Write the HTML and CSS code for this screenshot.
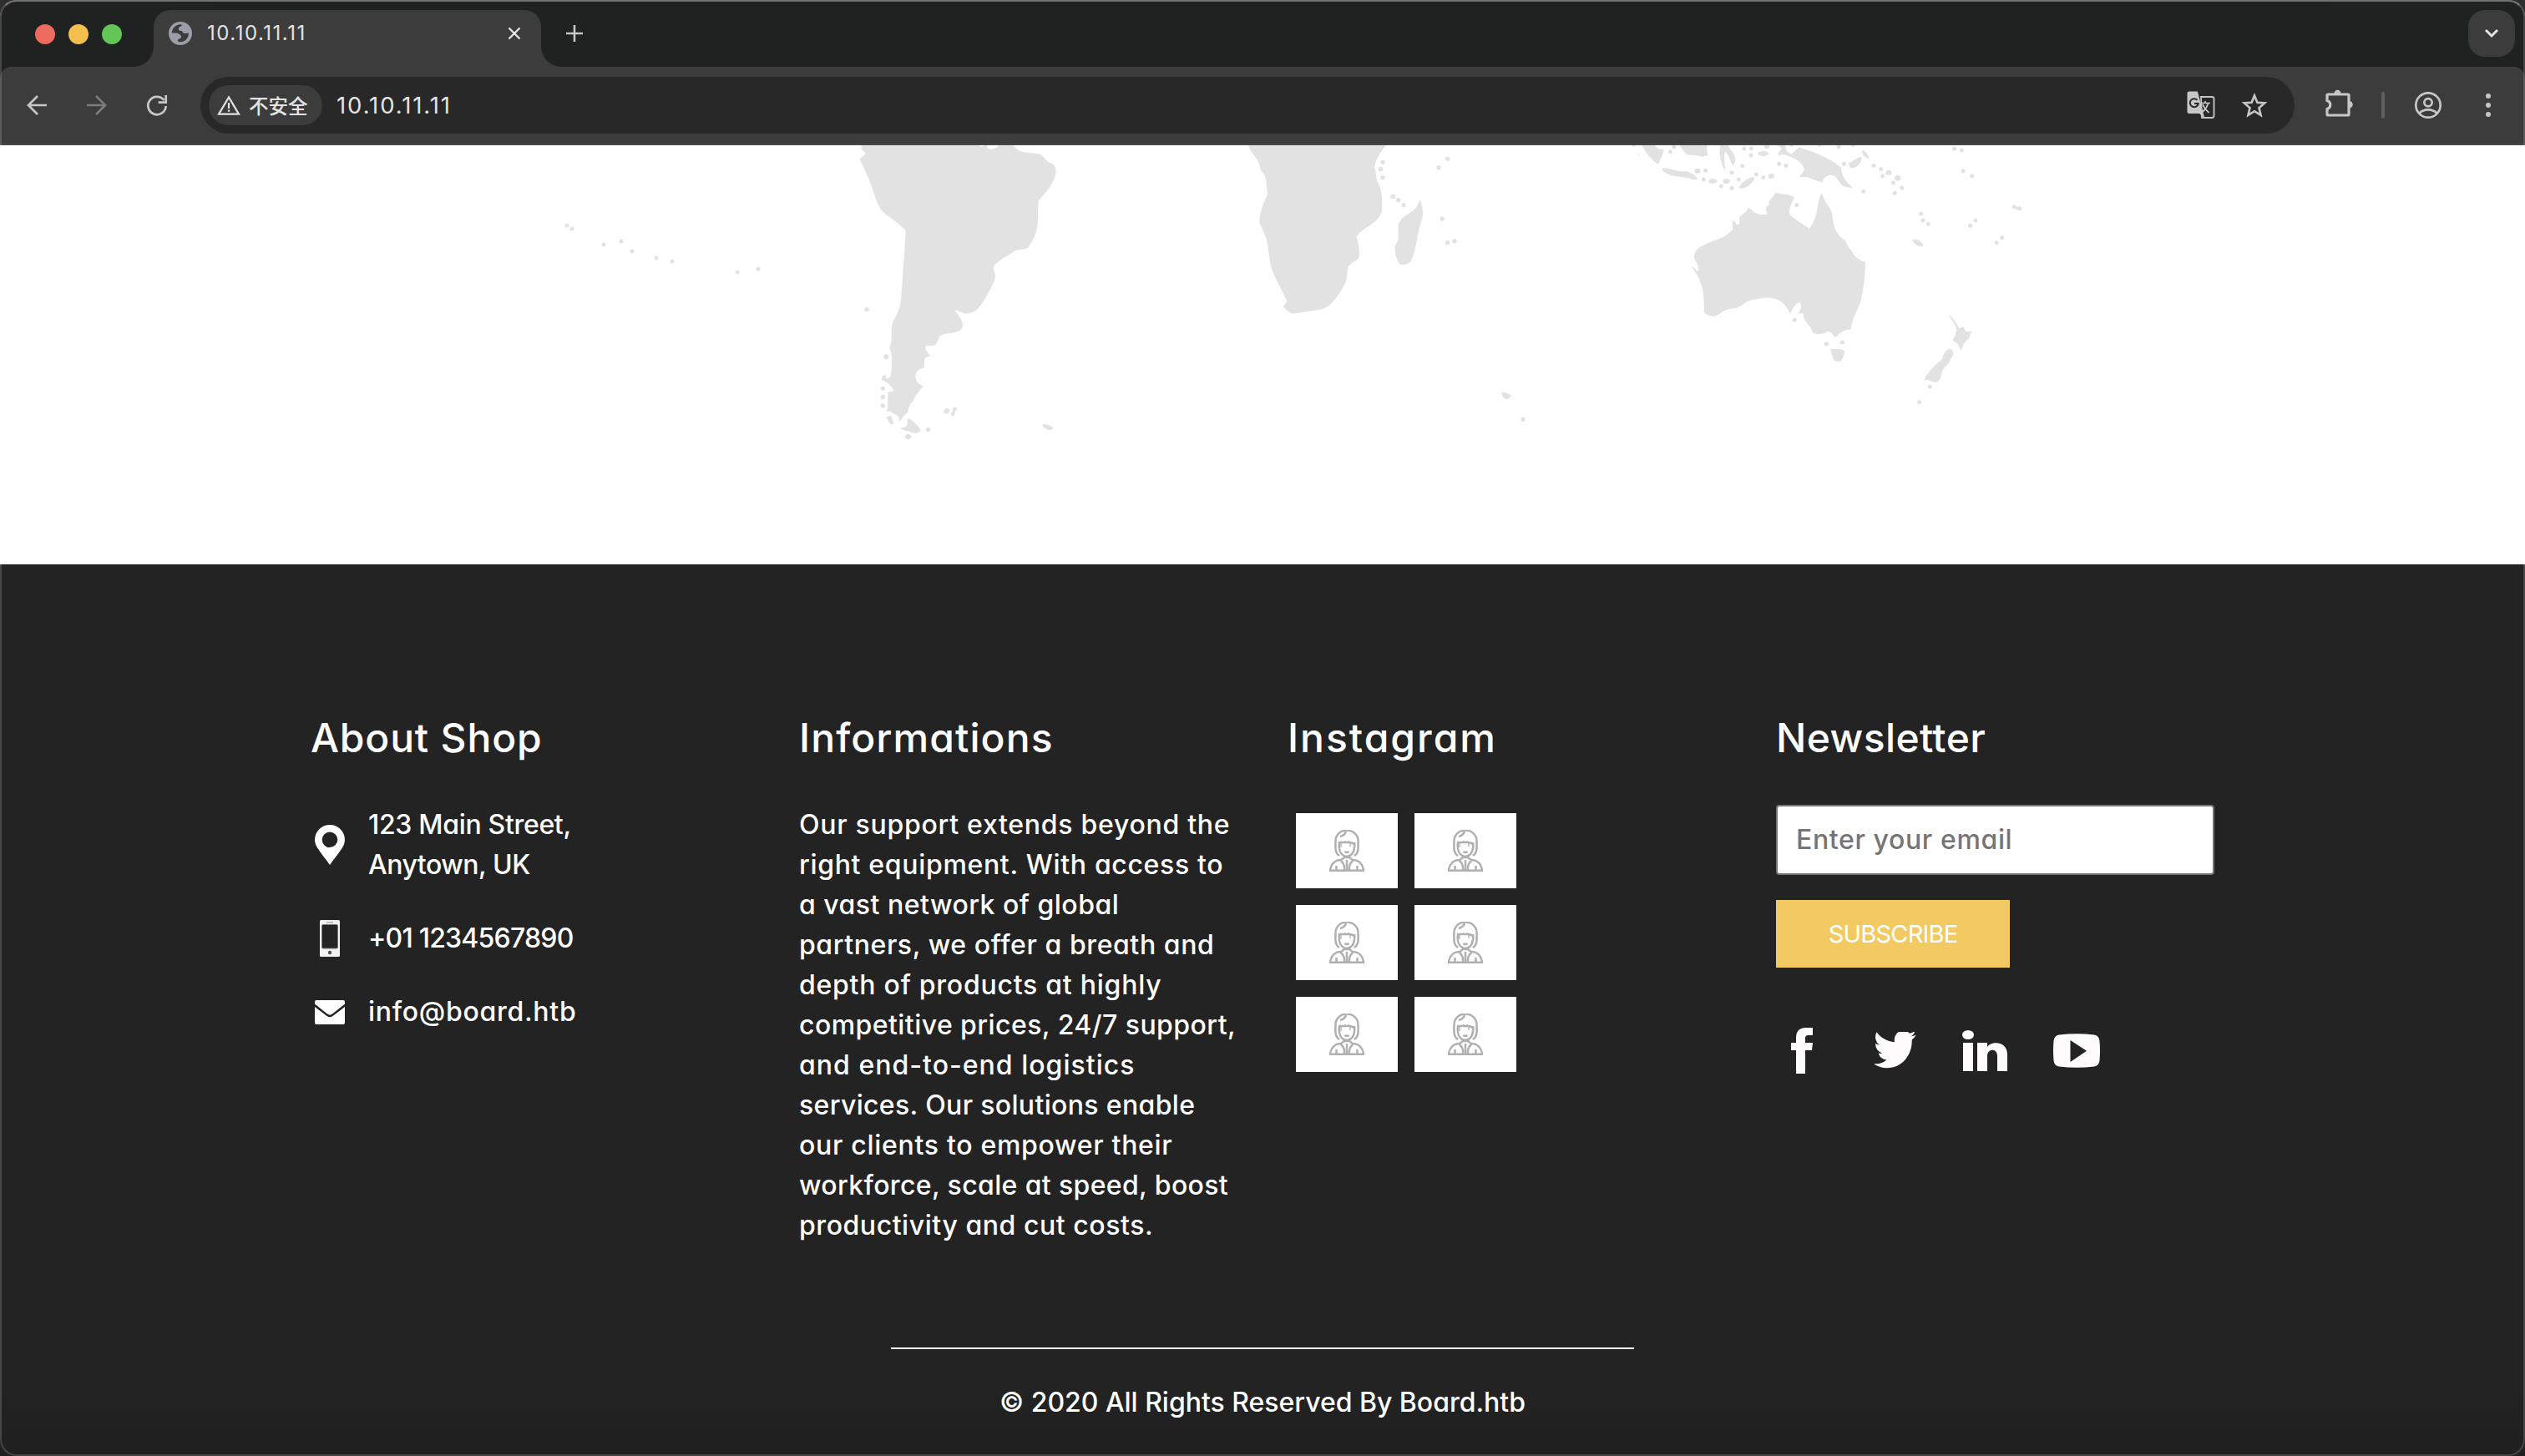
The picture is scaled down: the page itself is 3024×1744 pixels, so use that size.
FILE: index.html
```html
<!DOCTYPE html>
<html lang="en">
<head>
<meta charset="utf-8">
<title>10.10.11.11</title>
<link rel="stylesheet" href="styles.css">
</head>
<body>
<div class="window">
  <header class="chrome">
    <div class="tabstrip">
      <div class="lights"><i class="light red"></i><i class="light amber"></i><i class="light green"></i></div>
      <div class="tab">
        <svg class="favicon" viewBox="0 0 28 28"><circle cx="14" cy="14" r="14" fill="#9a9ea8"/><path d="M10.3 3.9c2.4-.9 5-.7 6-.1-.3 1.9-4 1.800-4.400 4.600-.3 2 1.500 2.600 4 2.600.3 1.600 1.300 2.700 3.400 2.900 1.800.2 3.300-.2 4.500-.5.5 3.500-2 10.700-9.800 10.900-2 0-3.200-.5-3.200-1.800 0-2.500 3.600-1.600 4.200-4 .5-2-1.200-2.600-2.600-3.700-1.700-1.500-6-1.200-8.600-1.300 0-4.300 2.900-8.200 6.500-9.600Z" fill="#3c3c3c"/></svg>
        <span class="tab-title">10.10.11.11</span>
        <svg class="tab-close" viewBox="0 0 16 16"><path d="M1.500 1.500l13 13M14.500 1.500l-13 13"/></svg>
      </div>
      <svg class="new-tab" viewBox="0 0 20 20"><path d="M10 0v20M0 10h20"/></svg>
      <div class="tab-search"><svg viewBox="0 0 18 12"><path d="M2 2l7 7 7-7"/></svg></div>
    </div>
    <div class="toolbar">
      <svg class="nav back" viewBox="0 0 24 24"><path d="M24 12H2M13 1L2 12l11 11"/></svg>
      <svg class="nav forward" viewBox="0 0 24 24"><path d="M0 12h22M11 1l11 11-11 11"/></svg>
      <svg class="nav reload" viewBox="0 0 24 24"><path d="M20.500 6A10.700 10.700 0 1 0 22.700 13M22.700 0v8.700h-9"/></svg>
      <div class="omnibox">
        <div class="chip">
          <svg viewBox="0 0 28 24"><path d="M14 2.500L2 22.700h24z" fill="none" stroke="#e3e3e3" stroke-width="2.200"/><path d="M14 9v7M14 17.500v2.300" stroke="#e3e3e3" stroke-width="2.200"/></svg>
          <span>不安全</span>
        </div>
        <span class="url">10.10.11.11</span>
        <svg class="translate" viewBox="0 0 34 34"><path d="M17 7h13a2.500 2.500 0 0 1 2.500 2.500v20a2.500 2.500 0 0 1-2.500 2.500H18z" fill="none" stroke="#c7c7c7" stroke-width="1.800"/><path d="M3 .5h9.800L21.500 33 15 27H3A2.500 2.500 0 0 1 .5 24.500V3A2.500 2.500 0 0 1 3 .5Z" fill="#c7c7c7"/><path d="M12.500 10.800a5 5 0 1 0 1.200 4.200H9" fill="none" stroke="#282828" stroke-width="2"/><path d="M16 14.500h12M22 12v2.500M25.500 14.500c-1 4-3.500 8-7 10.500M19 16c1.500 4 4 7 7.500 10" fill="none" stroke="#c7c7c7" stroke-width="1.700"/></svg>
        <svg class="star" viewBox="0 0 32 31"><path d="M16 3.500l3.400 8.200 8.800.7-6.700 5.800 2.100 8.700-7.600-4.700-7.600 4.700 2.100-8.700-6.700-5.800 8.800-.7z"/></svg>
      </div>
      <svg class="ext" viewBox="0 0 34 34"><path d="M3 6h24a1 1 0 0 1 1 1v23a1 1 0 0 1-1 1H3a1 1 0 0 1-1-1v-6.500a5.200 5.200 0 0 0 0-10V7a1 1 0 0 1 1-1Z" fill="none" stroke="#c7c7c7" stroke-width="3.200"/><path d="M10.500 5a4 4.300 0 0 1 8 0zM28.500 14a4.200 4.200 0 0 1 0 8.400z" fill="#c7c7c7"/></svg>
      <i class="divider"></i>
      <svg class="avatar" viewBox="0 0 32 32"><circle cx="16" cy="16" r="14.700"/><circle cx="16" cy="12.800" r="4.600"/><path d="M5.500 25.500c5.500-5.500 15.500-5.500 21 0"/></svg>
      <svg class="menu" viewBox="0 0 6 28"><circle cx="3" cy="3" r="3"/><circle cx="3" cy="14" r="3"/><circle cx="3" cy="25" r="3"/></svg>
    </div>
  </header>

  <main class="map">
    <svg viewBox="0 174 3024 502" fill="#e2e2e2" stroke-linecap="round">
      <g transform="translate(980 160) scale(.33333)">
        <path d="M155 38V55L171 71 149 92C165 125 180 155 190 187C203 220 210 252 227 276C250 300 290 320 314 348C310 430 303 520 297 600C293 640 270 665 264 692C260 715 268 740 256 772C268 795 264 830 262 862C258 880 252 885 240 877L228 886C248 892 262 905 271 924L250 930V988L244 996C265 998 280 1010 292 1022L288 1036C300 1028 308 1010 321 1002C325 985 328 972 340 962C350 938 362 925 378 908C355 900 349 885 349 870C350 855 360 846 378 842C384 830 378 818 384 806L403 798C390 785 383 775 385 764C400 760 414 764 422 758C432 745 430 732 442 724C470 714 520 722 519 684C514 662 500 652 490 633C510 636 520 652 545 645C575 640 592 605 607 580C620 555 634 530 637 512C635 498 625 484 633 472C655 452 675 442 695 430C715 408 738 424 755 408C770 390 780 365 786 340C792 305 786 265 792 240C820 208 852 175 854 135C854 120 845 108 830 104C815 94 812 84 798 74C775 68 755 70 730 65C712 58 706 48 694 38H652C640 60 614 60 606 50L604 40 583 48 575 38Z"/>
        <path d="M323 1023C345 1036 360 1050 368 1068C355 1080 340 1077 330 1072C315 1068 305 1066 294 1057C320 1056 321 1050 320 1030ZM244 1018L262 1014 271 1042 260 1046ZM231 870L242 868 244 884 228 886ZM450 995C460 980 478 988 470 1000C464 1010 450 1008 450 995ZM484 984H498L488 1010 480 1012ZM804 1047C815 1040 840 1050 845 1060C830 1072 815 1064 804 1047Z"/>
        <ellipse cx="323" cy="1089" rx="11" ry="9"/><circle cx="174" cy="632" r="8"/><circle cx="244" cy="802" r="9"/><circle cx="232" cy="916" r="8"/><circle cx="232" cy="947" r="8"/><circle cx="232" cy="978" r="8"/><circle cx="395" cy="1064" r="8"/><circle cx="491" cy="990" r="7"/><circle cx="483" cy="1008" r="7"/>
      </g>
      <g transform="translate(1480 160) scale(.33333)">
        <path d="M45 38C50 72 85 85 88 128C116 160 107 170 114 212C108 240 85 270 85 320C110 370 113 380 120 440C128 510 160 545 184 604L170 621C182 635 190 642 206 647L300 633C340 625 350 602 375 570C410 520 395 505 404 480C420 455 444 460 444 435C444 405 440 390 433 372C460 330 520 325 526 270C526 230 525 200 510 175C500 150 506 135 497 120C510 75 530 55 542 38Z"/>
        <path d="M661 236C672 260 676 290 668 310C652 360 648 420 630 458C618 470 600 472 591 471C575 450 571 425 572 402C590 380 583 370 584 345C583 300 615 295 638 276C655 262 656 250 661 236ZM955 932C968 922 978 940 990 938C982 962 960 958 955 932Z"/>
        <g><circle cx="528" cy="103" r="8"/><circle cx="521" cy="128" r="8"/><circle cx="528" cy="158" r="8"/><circle cx="565" cy="226" r="8"/><circle cx="584" cy="239" r="8"/><circle cx="603" cy="257" r="8"/><circle cx="761" cy="91" r="8"/><circle cx="729" cy="122" r="8"/><circle cx="742" cy="306" r="8"/><circle cx="761" cy="392" r="8"/><circle cx="786" cy="386" r="8"/><circle cx="1032" cy="1027" r="8"/></g>
      </g>
      <g transform="translate(1940 160) scale(.33333)">
        <path d="M560 212C580 218 600 216 612 222L627 230C618 250 606 265 610 290C630 310 655 322 680 342C720 290 705 240 726 212C738 260 762 262 764 300C768 340 780 365 810 385C820 410 832 418 842 437C855 452 868 455 882 463C882 510 875 560 866 600C850 645 835 665 829 704C805 704 795 712 776 732C764 725 758 710 745 712C730 722 705 725 692 714C688 692 670 685 660 660C662 645 652 640 640 652C646 635 655 625 648 608C632 605 622 630 612 647C600 625 590 605 560 595C530 583 500 595 465 600C445 608 430 628 412 628C375 630 365 645 345 656C330 660 310 652 302 640C304 600 300 560 288 530C282 510 270 500 260 480C270 480 275 498 281 494C290 470 264 460 267 437C272 410 300 402 330 388C365 375 375 375 405 345V310C415 318 418 328 424 328C436 318 426 310 432 298C445 285 455 285 462 267C478 270 475 295 528 290C530 275 515 272 536 255C530 240 550 232 560 212Z"/>
        <path d="M756 773C775 776 800 770 807 782C805 800 800 810 794 817C785 822 772 819 768 812C764 800 760 788 756 773ZM1181 650C1192 655 1208 680 1220 700L1234 694 1243 712 1263 711C1258 725 1256 736 1250 740C1240 745 1235 760 1224 779C1218 765 1220 755 1196 744C1210 715 1210 705 1208 695C1200 678 1188 665 1181 650ZM1190 774C1200 782 1202 798 1190 806C1182 830 1162 840 1157 856C1155 875 1150 890 1135 894C1115 892 1110 880 1092 888C1105 860 1130 830 1157 812C1162 795 1170 772 1190 774ZM1050 384C1065 372 1088 392 1090 402C1075 412 1060 398 1050 384Z"/>
        <path d="M560 38H595C592 55 600 65 615 74L643 50C690 62 750 85 795 122C798 160 812 170 838 196C805 192 798 190 785 168C770 140 735 145 728 174C705 174 680 150 646 156C655 142 664 135 662 126C655 98 620 85 590 75L570 78C566 65 580 60 582 52ZM76 38H122C130 50 142 60 158 56C155 80 145 90 138 110C115 98 90 65 76 38ZM213 38H315C310 55 315 70 315 77L295 83C275 75 250 80 240 74C228 65 220 50 213 38ZM361 38H389C390 55 405 60 412 80C418 100 412 112 405 114C395 95 390 75 378 64C372 85 376 115 380 130C365 120 368 105 362 92C356 75 359 55 361 38ZM152 124C190 125 200 138 235 136C255 138 268 150 280 162C268 172 255 160 235 158C200 154 165 152 152 130ZM428 196C432 175 470 152 484 158C480 180 445 204 428 196ZM822 106C840 100 855 82 868 85C872 110 840 130 826 122ZM869 60C885 62 896 80 894 90C880 86 870 75 869 60ZM62 66L72 80 66 76ZM1410 258L1440 266 1434 276 1412 266Z"/>
        <ellipse cx="279" cy="134" rx="11" ry="9"/><ellipse cx="334" cy="171" rx="15" ry="8"/><ellipse cx="383" cy="171" rx="13" ry="9"/><ellipse cx="515" cy="72" rx="19" ry="9"/><ellipse cx="528" cy="46" rx="9" ry="9"/><ellipse cx="544" cy="153" rx="11" ry="9"/><ellipse cx="966" cy="140" rx="11" ry="9"/><ellipse cx="998" cy="160" rx="11" ry="10"/>
        <path fill="none" stroke="#e2e2e2" stroke-width="15" d="M49 40h0M181 66h0M194 48h0M308 133h0M301 165h0M364 189h0M402 196h0M402 140h0M427 165h0M440 116h0M446 54h0M472 54h0M471 78h0M490 146h0M515 158h0M572 109h0M597 115h0M617 40h0M717 40h0M786 48h0M838 40h0M805 109h0M875 208h0M912 115h0M938 128h0M944 152h0M982 177h0M1013 195h0M988 214h0M635 257h0M1202 54h0M1228 60h0M1234 134h0M1265 152h0M1082 288h0M1089 312h0M1108 325h0M1259 331h0M1278 312h0M1373 374h0M1354 392h0M1417 263h0M1436 269h0M628 670h0M742 756h0M799 750h0M1114 910h0M1076 965h0"/>
      </g>
      <path fill="none" stroke="#e2e2e2" stroke-width="5" d="M679 270h0M685 274h0M723 293h0M744 289h0M757 301h0M786 309h0M805 313h0M883 326h0M908 322h0"/>
    </svg>
  </main>

  <footer class="footer">
    <div class="columns">
      <section>
        <h2 class="t-about">About Shop</h2>
        <ul class="contact">
          <li><svg class="pin" viewBox="0 0 36 48"><path fill-rule="evenodd" d="M18 0a18 18 0 0 1 18 18c0 9-10 18-18 30C10 36 0 27 0 18A18 18 0 0 1 18 0Zm0 8.500a9.300 9.300 0 1 0 0 18.600 9.300 9.300 0 0 0 0-18.600Z"/></svg>
            <p><span class="l-main">123 Main Street,</span><span class="l-any">Anytown, UK</span></p></li>
          <li><svg class="phone" viewBox="0 0 24 44"><rect width="24" height="44" rx="1.500" fill="#f2f0f1"/><rect x="2.500" y="5.500" width="19" height="28.500" rx="1.500" fill="#232323" stroke="#777" stroke-width="1"/><rect x="8" y="2" width="8" height="2" fill="#bbb"/><circle cx="12" cy="39" r="2.200" fill="#555"/></svg>
            <p><span class="l-tel">+01 1234567890</span></p></li>
          <li><svg class="mail" viewBox="0 0 36 29"><path d="M2 0h32a2 2 0 0 1 2 2v2.500L21 16.500q-3 2.300-6 0L0 4.500V2a2 2 0 0 1 2-2ZM0 8l14.500 11q3.500 2.500 7 0L36 8v19a2 2 0 0 1-2 2H2a2 2 0 0 1-2-2Z"/></svg>
            <p><span class="l-mail">info@board.htb</span></p></li>
        </ul>
      </section>
      <section>
        <h2 class="t-info">Informations</h2>
        <p class="info"><span class="i1">Our support extends beyond the</span><span class="i2">right equipment. With access to</span><span class="i3">a vast network of global</span><span class="i4">partners, we offer a breath and</span><span class="i5">depth of products at highly</span><span class="i6">competitive prices, 24/7 support,</span><span class="i7">and end-to-end logistics</span><span class="i8">services. Our solutions enable</span><span class="i9">our clients to empower their</span><span class="i10">workforce, scale at speed, boost</span><span class="i11">productivity and cut costs.</span></p>
      </section>
      <section>
        <h2 class="t-insta">Instagram</h2>
        <svg class="defs" width="0" height="0"><defs><g id="person" fill="none" stroke="#b0b0b0" stroke-width="2.500">
          <path d="M12 31C6 27 7.500 20 7.500 13a13.500 12.500 0 0 1 27 0c0 7 1.500 14-4.500 18"/>
          <path d="M12 15c-1 8 1 16 9 17 8-1 10-9 9-17M11 15h11c4-.5 7 1 9 3M13 8c4-1 6-3 7-6"/>
          <path d="M14 16v5M19 13v3M23 13v3M25 16v4" stroke-width="1.300"/><path d="M18.500 26q2.500 2 5 0"/>
          <path d="M1 50c0-9 6-14 13-14l4-3h6l4 3c7 0 13 5 13 14M14 37c5 5 4 8 4 13M28 37c-5 5-4 8-4 13M21 36v13M8.500 43v6M33.500 43v6"/><path d="M0 49h42" stroke-width="3"/></g></defs></svg>
        <div class="gallery">
          <div class="tile"><svg viewBox="0 0 42 50"><use href="#person"/></svg></div>
          <div class="tile"><svg viewBox="0 0 42 50"><use href="#person"/></svg></div>
          <div class="tile"><svg viewBox="0 0 42 50"><use href="#person"/></svg></div>
          <div class="tile"><svg viewBox="0 0 42 50"><use href="#person"/></svg></div>
          <div class="tile"><svg viewBox="0 0 42 50"><use href="#person"/></svg></div>
          <div class="tile"><svg viewBox="0 0 42 50"><use href="#person"/></svg></div>
        </div>
      </section>
      <section>
        <h2 class="t-news">Newsletter</h2>
        <div class="email"><span class="l-email">Enter your email</span></div>
        <button class="subscribe"><span class="l-sub">SUBSCRIBE</span></button>
        <div class="social">
          <svg class="fb" viewBox="0 0 26 55"><path d="M6 55V27H0V18h6v-6C6 4 10 0 18 0h8v9h-5c-3 0-4 1-4 4v5h9l-1 9h-8v28z"/></svg>
          <svg class="tw" viewBox="0 3 24 19.500" preserveAspectRatio="none"><path d="M23.950 4.570a10 10 0 0 1-2.820.77 4.960 4.960 0 0 0 2.160-2.720c-.95.550-2 .950-3.130 1.180a4.920 4.920 0 0 0-8.380 4.480C7.690 8.090 4.070 6.130 1.640 3.160a4.920 4.920 0 0 0 1.520 6.570 4.900 4.900 0 0 1-2.230-.61v.06a4.920 4.920 0 0 0 3.950 4.830 5 5 0 0 1-2.210.08 4.940 4.940 0 0 0 4.600 3.420A9.870 9.870 0 0 1 0 19.540a14 14 0 0 0 7.550 2.210c9.050 0 14-7.500 14-13.980 0-.21 0-.42-.02-.63a9.940 9.940 0 0 0 2.420-2.570z"/></svg>
          <svg class="li" viewBox="0 0 54 49"><ellipse cx="7" cy="5.500" rx="7" ry="5.500"/><path d="M1 15h12v34H1zM18 15h12v5c4-7 24-8 24 9v20H42V31c0-10-12-9-12 0v18H18z"/></svg>
          <svg class="yt" viewBox="0 0 56 41"><path fill-rule="evenodd" d="M7 1.500Q28-1 49 1.500 55 2.500 55.500 9q1 11.500 0 23-.5 6.500-6.500 7.500-21 2.500-42 0Q1 38.500.5 32q-1-11.500 0-23Q1 2.500 7 1.500ZM20.500 8v26L40 20.700z"/></svg>
        </div>
      </section>
    </div>
    <div class="legal"><span class="l-copy">© 2020 All Rights Reserved By Board.htb</span></div>
  </footer>
</div>
</body>
</html>
```
FILE: styles.css
```css
* { box-sizing: border-box; }
body { margin: 0; background: #2e2e2e; font-family: Inter, "Noto Sans CJK SC", sans-serif; }
svg { display: block; flex: none; }
.window { position: relative; width: 3024px; height: 1744px; overflow: hidden; border-radius: 20px 20px 0 0; background: #fff; }
.window::after { content: ""; position: absolute; inset: 0; border: 2px solid rgba(255, 255, 255, .17); border-top-color: rgba(255, 255, 255, .36); border-radius: 20px; }

/* Browser chrome */
.chrome { height: 174px; background: #202221; }
.tabstrip { height: 80px; display: flex; align-items: flex-start; padding: 0 12px 0 42px; }
.lights { display: flex; gap: 16px; padding-top: 29px; width: 142px; }
.light { width: 24px; height: 24px; border-radius: 50%; }
.red { background: #ed6a5f; }
.amber { background: #f5bf4f; }
.green { background: #62c655; }
.tab { position: relative; width: 464px; height: 68px; margin-top: 12px; padding: 14px 24px 0 18px; display: flex; align-items: flex-start; background: #3c3c3c; border-radius: 20px 20px 0 0; }
.tab::before, .tab::after { content: ""; position: absolute; bottom: 0; width: 24px; height: 24px; }
.tab::before { left: -24px; background: radial-gradient(circle at 0 0, transparent 23.5px, #3c3c3c 24px); }
.tab::after { right: -24px; background: radial-gradient(circle at 100% 0, transparent 23.5px, #3c3c3c 24px); }
.favicon { width: 28px; height: 28px; }
.tab-title { margin-left: 18px; font-size: 24px; line-height: 28px; letter-spacing: 1.51px; color: #e3e3e3; flex: 1; }
.tab-close { width: 16px; height: 16px; margin-top: 6px; stroke: #e3e3e3; stroke-width: 2.4; }
.new-tab { width: 20px; height: 20px; margin: 30px 0 0 30px; stroke: #c7c7c7; stroke-width: 2.6; }
.tab-search { width: 56px; height: 56px; margin: 12px 0 0 auto; border-radius: 20px; background: #3c3c3c; display: flex; align-items: center; justify-content: center; }
.tab-search svg { width: 18px; height: 12px; fill: none; stroke: #e3e3e3; stroke-width: 3; }

.toolbar { height: 94px; padding: 0 40px 0 32px; display: flex; align-items: center; background: #3c3c3c; border-bottom: 2px solid #474747; border-radius: 14px 14px 0 0; }
.nav { width: 24px; height: 24px; fill: none; stroke: #c7c7c7; stroke-width: 2.7; margin-right: 48px; overflow: visible; }
.forward { stroke: #7c7c7c; }
.reload { margin-right: 40px; }
.omnibox { width: 2508px; height: 68px; border-radius: 34px; background: #282828; display: flex; align-items: center; padding: 0 32px 0 10px; }
.chip { width: 136px; height: 48px; border-radius: 24px; background: #3c3c3c; display: flex; align-items: center; gap: 10px; padding-left: 10px; font: 500 23.500px "Noto Sans CJK SC", sans-serif; color: #e3e3e3; white-space: nowrap; }
.chip svg { width: 28px; height: 24px; }
.url { margin-left: 17px; font-size: 27.500px; line-height: 36px; letter-spacing: 1.9px; color: #e3e3e3; flex: 1; }
.translate { width: 34px; height: 34px; }
.star { width: 32px; height: 31px; margin-left: 31px; fill: none; stroke: #c7c7c7; stroke-width: 2.6; }
.ext { width: 34px; height: 34px; margin: -4px 0 0 37px; }
.divider { width: 4px; height: 32px; margin-left: 33px; border-radius: 2px; background: #5f5f5f; }
.avatar { width: 32px; height: 32px; margin-left: 36px; fill: none; stroke: #c7c7c7; stroke-width: 2.7; }
.menu { width: 6px; height: 28px; margin-left: 53px; fill: #c7c7c7; }

/* World map */
.map { height: 502px; background: #fff; }
.map svg { width: 3024px; height: 502px; }

/* Footer */
.footer { height: 1068px; padding-top: 179px; background: linear-gradient(#232323 92%, #1f1f1f); color: #fff; font-size: 32px; font-weight: 450; line-height: 48px; font-feature-settings: "cv11"; }
.columns { height: 759px; padding-left: 372px; display: grid; grid-template-columns: repeat(4, 585px); }
.footer span { display: block; width: max-content; white-space: nowrap; }
h2 { margin: 0 0 51px; font-size: 48px; line-height: 58px; font-weight: 450; white-space: nowrap; width: max-content; }
p { margin: 0; }
.contact { margin: 0; padding: 0; list-style: none; display: flex; flex-direction: column; gap: 40px; }
.contact li { display: flex; align-items: center; gap: 23px; }
.contact svg { width: 46px; fill: #fff; }
.pin { height: 48px; }
.phone { height: 44px; }
.mail { height: 29px; }
.defs { position: absolute; }
.gallery { display: grid; grid-template-columns: 122px 122px; gap: 20px; padding: 10px 0 0 10px; }
.tile { height: 90px; background: #fff; display: flex; align-items: center; justify-content: center; }
.tile svg { width: 42px; height: 50px; }
.email { width: 525px; height: 84px; display: flex; align-items: center; padding: 0 0 0 22px; background: #fff; border: 2px solid #767676; border-radius: 4px; color: #757575; }
.subscribe { width: 280px; height: 81px; margin: 30px 0 0; padding: 0; border: 0; display: flex; align-items: center; justify-content: center; background: #f3ca62; color: #fff; font: 29px Inter, sans-serif; }
.social { height: 55px; display: flex; align-items: center; margin: 72px 0 0 18px; fill: #fdfbfc; }
.fb { width: 26px; height: 55px; }
.tw { width: 51px; height: 45px; margin-left: 73px; }
.li { width: 54px; height: 49px; margin-left: 55px; }
.yt { width: 56px; height: 41px; margin-left: 55px; }
.legal { width: 890px; margin: 0 auto; padding-top: 40px; border-top: 2px solid #fff; display: flex; justify-content: center; }

/* Tracking per line */
.t-about { letter-spacing: .82px; }
.t-info { letter-spacing: 1.09px; }
.t-insta { letter-spacing: 1.99px; }
.t-news { letter-spacing: .39px; }
.l-main { letter-spacing: -.32px; }
.l-any { letter-spacing: -.49px; }
.l-tel { letter-spacing: -.79px; }
.l-mail { letter-spacing: .71px; }
.i1 { letter-spacing: .72px; }
.i2 { letter-spacing: .67px; }
.i3 { letter-spacing: .49px; }
.i4 { letter-spacing: .58px; }
.i5 { letter-spacing: .75px; }
.i6 { letter-spacing: .44px; }
.i7 { letter-spacing: 1.01px; }
.i8 { letter-spacing: .34px; }
.i9 { letter-spacing: .7px; }
.i10 { letter-spacing: .36px; }
.i11 { letter-spacing: .55px; }
.l-email { letter-spacing: .63px; }
.l-sub { letter-spacing: -.8px; }
.l-copy { letter-spacing: -.02px; }
```
